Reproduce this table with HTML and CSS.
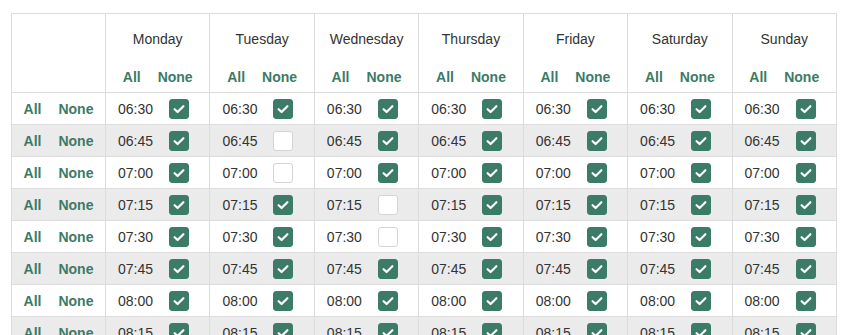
FILE: index.html
```html
<!DOCTYPE html>
<html>
<head>
<meta charset="utf-8">
<link rel="stylesheet" href="styles.css">
</head>
<body>
<div class="wrap">
<table class="sched">
<thead>
<tr>
<th class="corner"></th>
<th><div class="day">Monday</div><div class="links"><a>All</a><a>None</a></div></th>
<th><div class="day">Tuesday</div><div class="links"><a>All</a><a>None</a></div></th>
<th><div class="day">Wednesday</div><div class="links"><a>All</a><a>None</a></div></th>
<th><div class="day">Thursday</div><div class="links"><a>All</a><a>None</a></div></th>
<th><div class="day">Friday</div><div class="links"><a>All</a><a>None</a></div></th>
<th><div class="day">Saturday</div><div class="links"><a>All</a><a>None</a></div></th>
<th><div class="day">Sunday</div><div class="links"><a>All</a><a>None</a></div></th>
</tr>
</thead>
<tbody id="rows"></tbody>
</table>
</div>
<script src="app.js"></script>
</body>
</html>
```
FILE: app.js
```js
const times = ["06:30","06:45","07:00","07:15","07:30","07:45","08:00","08:15","08:30"];
const unchecked = {"06:45":[1],"07:00":[1],"07:15":[2],"07:30":[2]};
const check = '<svg viewBox="0 0 20 20" width="20" height="20"><path d="M5.6 10.2 L8.6 13 L14.4 7.2" fill="none" stroke="#fff" stroke-width="2.2" stroke-linecap="round" stroke-linejoin="round"/></svg>';
const body = document.getElementById("rows");
let html = "";
times.forEach((t, i) => {
  html += '<tr class="' + (i % 2 ? "alt" : "") + '"><td class="rowhead"><div class="links"><a>All</a><a>None</a></div></td>';
  for (let d = 0; d < 7; d++) {
    const off = (unchecked[t] || []).includes(d);
    html += '<td><label class="slot"><span class="time">' + t + '</span><span class="box' + (off ? '' : ' on') + '">' + (off ? '' : check) + '</span></label></td>';
  }
  html += '</tr>';
});
body.innerHTML = html;
```
FILE: styles.css
```css
html, body {
  margin: 0;
  padding: 0;
  background: #fff;
}
body {
  font-family: "Liberation Sans", Arial, Helvetica, sans-serif;
  font-size: 14px;
  color: #333;
}
.wrap {
  padding: 13px 0 0 11px;
}
.sched {
  border-collapse: separate;
  border-spacing: 0;
  table-layout: fixed;
  width: 826px;
  border-top: 1px solid #dcdcdc;
  border-left: 1px solid #dcdcdc;
}
.sched th, .sched td {
  box-sizing: border-box;
  border-right: 1px solid #dcdcdc;
  border-bottom: 1px solid #dcdcdc;
  padding: 0;
}
.sched th.corner {
  width: 94px;
}
.sched th {
  font-weight: normal;
  height: 79px;
  vertical-align: top;
  text-align: center;
  padding: 15px 0 5px;
}
.day {
  line-height: 20px;
  height: 20px;
  color: #333;
}
.links {
  display: flex;
  justify-content: center;
  gap: 17px;
  line-height: 20px;
}
th .links {
  margin-top: 18px;
}
.links a {
  color: #3b7b67;
  font-weight: bold;
  text-decoration: none;
}
.sched td {
  height: 32px;
  vertical-align: middle;
}
tr.alt td {
  background: #ebebeb;
}
.slot {
  display: flex;
  align-items: center;
  padding-left: 12px;
  gap: 16px;
  line-height: 20px;
}
.box {
  display: block;
  width: 20px;
  height: 20px;
  box-sizing: border-box;
  border-radius: 3px;
  background: #fff;
  border: 1px solid #d4d4d4;
}
.box.on {
  background: #3b7b67;
  border-color: #3b7b67;
}
.box svg {
  display: block;
  margin: -1px;
}
```
